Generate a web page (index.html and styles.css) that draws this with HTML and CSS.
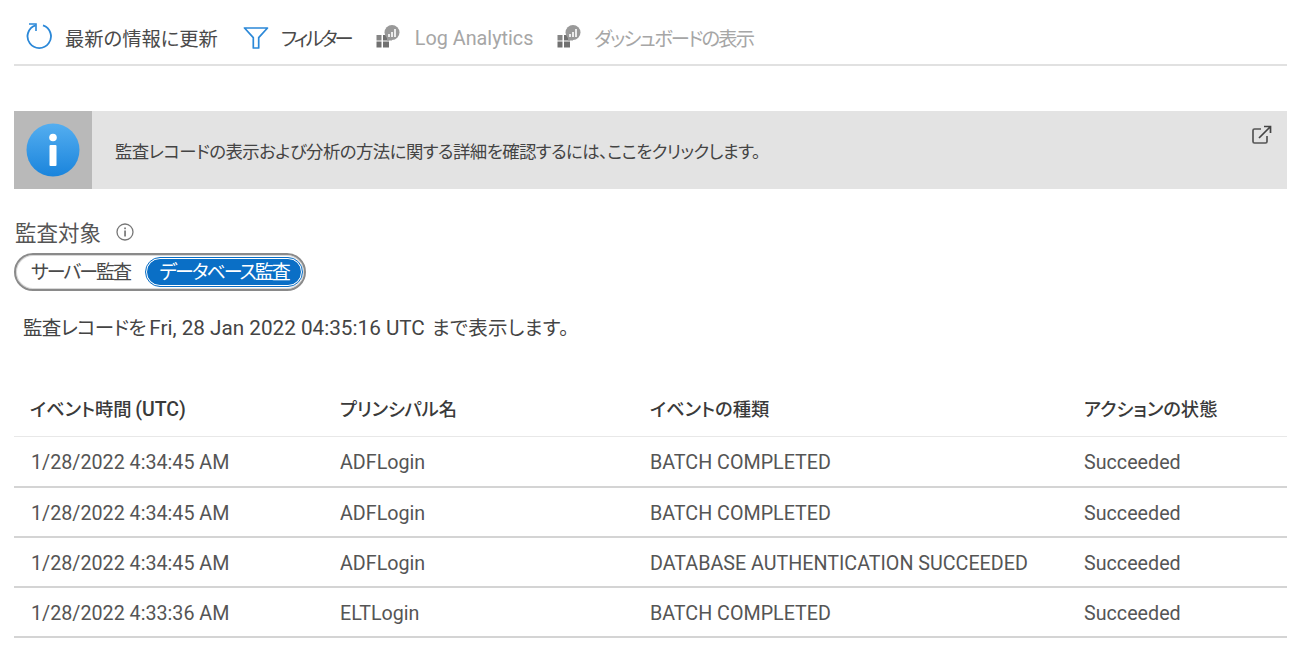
FILE: index.html
```html
<!DOCTYPE html>
<html lang="ja">
<head>
<meta charset="utf-8">
<title>監査レコード</title>
<link rel="stylesheet" href="styles.css">
</head>
<body>
<div class="page">
  <div class="toolbar">
    <div class="tool tool-refresh">
      <svg class="icon" width="26" height="28" viewBox="0 0 26 28"><path d="M17 2.300A11.700 11.700 0 1 1 9.500 2.300" fill="none" stroke="#2b88d8" stroke-width="1.800"/><path d="M3 1h7v7" fill="none" stroke="#2b88d8" stroke-width="1.600"/></svg>
      <span>最新の情報に更新</span>
    </div>
    <div class="tool tool-filter">
      <svg class="icon" width="26" height="24" viewBox="0 0 26 24"><path d="M1.500 2h23l-8.800 9.600V22h-5.400V11.600z" fill="none" stroke="#2b88d8" stroke-width="1.700" stroke-linejoin="round"/></svg>
      <span class="tight-kana">フィルター</span>
    </div>
    <div class="tool tool-off tool-log">
      <svg class="icon" width="24" height="24" viewBox="0 0 24 24"><use href="#la"/></svg>
      <span class="latin">Log Analytics</span>
    </div>
    <div class="tool tool-off tool-dash">
      <svg class="icon" width="24" height="24" viewBox="0 0 24 24"><use href="#la"/></svg>
      <span class="dash-label">ダッシュボードの表示</span>
    </div>
  </div>
  <svg class="defs" width="0" height="0"><defs><g id="la"><rect x="0.500" y="11" width="5" height="5.500" fill="#858585"/><rect x="0.500" y="17.500" width="5" height="6" fill="#707070"/><rect x="7" y="17.500" width="6" height="6" fill="#707070"/><rect x="7" y="11" width="6" height="5.500" fill="#707070"/><circle cx="16" cy="8.500" r="7.500" fill="#999"/><path d="M11 13.500h5v3h-5z" fill="#999"/><path d="M13 10v3M16 8v5M19 5v8" stroke="#fff" stroke-width="1.600"/></g></defs></svg>

  <div class="banner">
    <div class="banner-icon">
      <svg width="54" height="54" viewBox="0 0 54 54"><defs><linearGradient id="blue" x1="0" y1="0" x2="0" y2="1"><stop offset="0" stop-color="#54aef0"/><stop offset="1" stop-color="#1a84dc"/></linearGradient></defs><circle cx="27" cy="27" r="26.500" fill="url(#blue)"/><circle cx="27" cy="14.500" r="3.800" fill="#fff"/><rect x="23.500" y="22" width="7" height="21" rx="1" fill="#fff"/></svg>
    </div>
    <div class="banner-text">監査レコードの表示および分析の方法に関する詳細を確認するには、ここをクリックします。</div>
    <svg class="external" width="22" height="22" viewBox="0 0 22 22"><path d="M10 5H3.500A1.500 1.500 0 0 0 2 6.500v11A1.500 1.500 0 0 0 3.500 19h11a1.500 1.500 0 0 0 1.500-1.500V12" fill="none" stroke="#555" stroke-width="1.700"/><path d="M8 14L19 3M13 2.500h6.500V9" fill="none" stroke="#444" stroke-width="1.700"/></svg>
  </div>

  <div class="field-label">
    <span>監査対象</span>
    <svg width="18" height="18" viewBox="0 0 18 18"><circle cx="9" cy="9" r="8" fill="none" stroke="#777" stroke-width="1.300"/><rect x="8.200" y="7.500" width="1.700" height="6" fill="#777"/><rect x="8.200" y="4.500" width="1.700" height="1.700" fill="#777"/></svg>
  </div>
  <div class="toggle">
    <div class="opt opt-off">サーバー監査</div>
    <div class="opt opt-on">データベース監査</div>
  </div>

  <div class="notice"><span class="notice-lead">監査レコードを</span> <span class="latin-lg">Fri, 28 Jan 2022 04:35:16 UTC</span> <span class="notice-tail">まで表示します。</span></div>

  <table class="grid">
    <thead>
      <tr><th class="c1 th1">イベント時間 <span class="th-latin">(UTC)</span></th><th class="c2">プリンシパル名</th><th class="c3">イベントの種類</th><th class="c4">アクションの状態</th></tr>
    </thead>
    <tbody>
      <tr><td class="c1">1/28/2022 4:34:45 AM</td><td class="c2">ADFLogin</td><td class="c3">BATCH COMPLETED</td><td class="c4">Succeeded</td></tr>
      <tr><td class="c1">1/28/2022 4:34:45 AM</td><td class="c2">ADFLogin</td><td class="c3">BATCH COMPLETED</td><td class="c4">Succeeded</td></tr>
      <tr><td class="c1">1/28/2022 4:34:45 AM</td><td class="c2">ADFLogin</td><td class="c3">DATABASE AUTHENTICATION SUCCEEDED</td><td class="c4">Succeeded</td></tr>
      <tr><td class="c1">1/28/2022 4:33:36 AM</td><td class="c2">ELTLogin</td><td class="c3">BATCH COMPLETED</td><td class="c4">Succeeded</td></tr>
    </tbody>
  </table>
</div>
</body>
</html>
```
FILE: styles.css
```css
html, body { margin: 0; padding: 0; background: #fff; }
body {
  font-family: Roboto, "Noto Sans CJK JP", sans-serif;
  font-feature-settings: "palt";
  color: #4a4a4a;
  font-size: 19px;
  overflow: hidden;
}
.page { width: 1273px; margin-left: 14px; }
.defs { position: absolute; }

.toolbar {
  height: 66px;
  box-sizing: border-box;
  border-bottom: 2px solid #e1e1e1;
  display: flex;
  align-items: center;
  padding: 11px 0 0 12px;
  font-size: 19.300px;
}
.tool { display: flex; align-items: center; gap: 13px; white-space: nowrap; }
.tool-refresh .icon { margin-bottom: 2px; }
.tool-off .icon { margin-bottom: 4px; }
.tool-filter { margin-left: 25px; gap: 12px; }
.tool-log { margin-left: 25px; gap: 15px; }
.tool-dash { margin-left: 24px; gap: 13px; }
.tool-off { color: #a6a6a6; }
.tight-kana { letter-spacing: -2.900px; }
.latin { font-size: 19.800px; margin-top: 2px; }
.dash-label { letter-spacing: -1.800px; }

.banner {
  margin-top: 45px;
  height: 78px;
  background: #e3e3e3;
  display: flex;
  align-items: center;
  position: relative;
}
.banner-icon {
  width: 78px;
  height: 78px;
  background: #b9b9b9;
  display: flex;
  align-items: center;
  justify-content: center;
  flex: none;
}
.banner-text { margin-left: 23px; font-size: 17.400px; color: #444; letter-spacing: -0.550px; }
.external { position: absolute; right: 14px; top: 13px; }

.field-label {
  margin-top: 27px;
  display: flex;
  align-items: center;
  gap: 15px;
  height: 30px;
  font-size: 21.500px;
  color: #555;
  padding-left: 1px;
}
.field-label svg { margin-top: 1px; }
.toggle {
  margin-top: 7px;
  width: 292px;
  height: 38px;
  box-sizing: border-box;
  border: 2px solid #8a8a8a;
  border-radius: 19px;
  display: flex;
  align-items: center;
  padding: 0 1px 0 15px;
  justify-content: space-between;
  font-size: 19px;
  box-shadow: inset 0 0 0 1px #d8d8d8;
}
.opt { white-space: nowrap; color: #4a4a4a; letter-spacing: -2px; }
.opt-off { padding-bottom: 3px; }
.opt-on {
  background: #0a6fc6;
  color: #fff;
  width: 156px;
  text-align: center;
  height: 28px;
  line-height: 27px;
  border-radius: 14px;
  margin-right: 1px;
  box-sizing: border-box;
  outline: 1px solid #0a6fc6;
  border: 1px solid #fff;
}

.notice { margin: 22px 0 0 9px; font-size: 19.500px; color: #444; line-height: 30px; }
.notice-lead { letter-spacing: -0.700px; }
.latin-lg { font-size: 20.700px; margin-left: -1px; }
.notice-tail { margin-left: 2px; letter-spacing: 0.300px; }

.grid {
  margin-top: 37px;
  width: 1273px;
  border-collapse: collapse;
  table-layout: fixed;
}
.grid th {
  height: 53px;
  text-align: left;
  font-weight: 500;
  font-size: 18.300px;
  color: #3a3a3a;
  border-bottom: 1px solid #e8e8e8;
  padding: 0 0 2px;
}
.th-latin { font-size: 19.500px; margin-left: -1px; }
.grid td {
  height: 46px;
  font-size: 19.700px;
  color: #555;
  border-bottom: 2px solid #d4d4d4;
  padding: 2px 0 0;
}
.grid tbody tr:first-child td { height: 47px; }
.c1 { width: 326px; padding-left: 17px !important; box-sizing: border-box; }
.th1 { padding-left: 16px !important; }
.c2 { width: 310px; }
.c3 { width: 434px; }
```
